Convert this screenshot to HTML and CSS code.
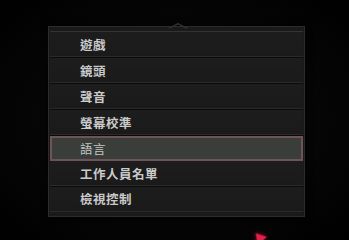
FILE: index.html
```html
<!DOCTYPE html>
<html lang="zh-Hant">
<head>
    <meta charset="UTF-8">
    <title>選項</title>
    <link rel="stylesheet" href="styles.css">
</head>
<body>
    <div class="screen">
        <!-- Options Menu -->
        <div class="menu">
            <div class="caret"></div>
            <div class="menu-inner">
                <div class="row">遊戲</div>
                <div class="row">鏡頭</div>
                <div class="row">聲音</div>
                <div class="row">螢幕校準</div>
                <div class="row selected">語言</div>
                <div class="row">工作人員名單</div>
                <div class="row">檢視控制</div>
            </div>
        </div>
        <div class="pointer"></div>
    </div>
</body>
</html>
```

FILE: styles.css
```css
/* General Styles */
body {
    margin: 0;
    background: #000;
    font-family: "Noto Sans CJK TC", "Noto Sans CJK SC", sans-serif;
    overflow: hidden;
}

.screen {
    position: relative;
    width: 349px;
    height: 240px;
    padding-top: 26px;
    box-sizing: border-box;
    background: radial-gradient(ellipse at center, #0c0c0c, #040404 70%, #000);
}

/* Menu Panel */
.menu {
    position: relative;
    width: 253px;
    margin-left: 48px;
    background: #1a1a1a;
    border: 1px solid #2c2c2c;
    box-shadow: 0 0 6px rgba(0,0,0,0.8);
    padding: 4px 1px 4px 1px;
}

.caret {
    position: absolute;
    top: -6px;
    left: 122px;
    width: 12px;
    height: 12px;
    border-top: 2px solid #333;
    border-left: 2px solid #333;
    transform: scaleY(0.5) rotate(45deg);
}

.menu-inner {
    border-top: 1px solid #333;
    border-bottom: 1px solid #2a2a2a;
    display: flex;
    flex-direction: column;
}

.row {
    height: 25px;
    line-height: 25px;
    padding-left: 30px;
    font-size: 12.5px;
    font-weight: bold;
    color: #cacaca;
    background: linear-gradient(#1d1d1d, #1a1a1a);
    border-bottom: 1px solid #0a0a0a;
    box-shadow: inset 0 -1px 0 #2a2a2a;
    letter-spacing: 0.5px;
}

.row:last-child {
    height: 24px;
    line-height: 24px;
    border-bottom: none;
    box-shadow: none;
}

.row.selected {
    height: 21px;
    line-height: 21px;
    padding-left: 28px;
    background: #3a3e3b;
    border: 2px solid #6e5458;
    color: #c4c7c4;
    font-weight: normal;
    box-shadow: none;
}

/* Red pointer arrow */
.pointer {
    position: absolute;
    left: 253px;
    top: 232px;
    width: 0;
    height: 0;
    border-left: 6px solid transparent;
    border-right: 6px solid transparent;
    border-bottom: 10px solid #e0204a;
    transform: rotate(-40deg);
    filter: drop-shadow(0 0 2px #a01030);
}
```
